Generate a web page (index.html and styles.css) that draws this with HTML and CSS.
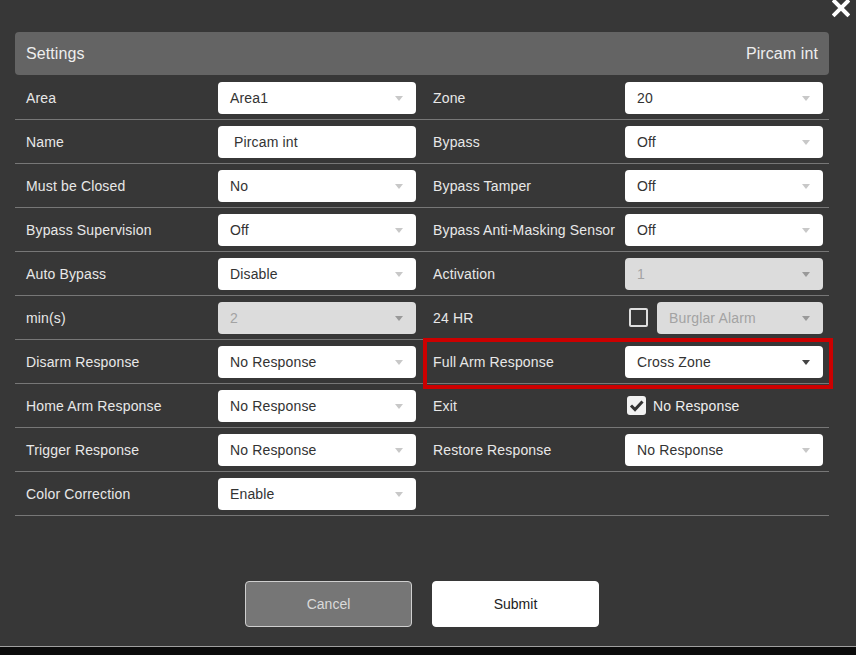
FILE: index.html
```html
<!DOCTYPE html>
<html>
<head>
<meta charset="utf-8">
<link rel="stylesheet" href="styles.css">
</head>
<body>
<div class="modal">
  <svg class="close" width="18" height="18" viewBox="0 0 18 18"><path d="M2.5 1.5 L15.5 14.5 M15.5 1.5 L2.5 14.5" stroke="#fff" stroke-width="4" stroke-linecap="square"/></svg>
  <div class="header"><span>Settings</span><span>Pircam int</span></div>
  <div class="grid">
    <div class="row">
      <div class="cell"><div class="label">Area</div><div class="select">Area1<i class="arrow"></i></div></div>
      <div class="cell"><div class="label">Zone</div><div class="select">20<i class="arrow"></i></div></div>
    </div>
    <div class="row">
      <div class="cell"><div class="label">Name</div><div class="select input">Pircam int</div></div>
      <div class="cell"><div class="label">Bypass</div><div class="select">Off<i class="arrow"></i></div></div>
    </div>
    <div class="row">
      <div class="cell"><div class="label">Must be Closed</div><div class="select">No<i class="arrow"></i></div></div>
      <div class="cell"><div class="label">Bypass Tamper</div><div class="select">Off<i class="arrow"></i></div></div>
    </div>
    <div class="row">
      <div class="cell"><div class="label">Bypass Supervision</div><div class="select">Off<i class="arrow"></i></div></div>
      <div class="cell"><div class="label">Bypass Anti-Masking Sensor</div><div class="select">Off<i class="arrow"></i></div></div>
    </div>
    <div class="row">
      <div class="cell"><div class="label">Auto Bypass</div><div class="select">Disable<i class="arrow"></i></div></div>
      <div class="cell"><div class="label">Activation</div><div class="select disabled">1<i class="arrow"></i></div></div>
    </div>
    <div class="row">
      <div class="cell"><div class="label">min(s)</div><div class="select disabled">2<i class="arrow"></i></div></div>
      <div class="cell"><div class="label">24 HR</div><div class="combo"><span class="checkbox"></span><div class="select disabled small">Burglar Alarm<i class="arrow"></i></div></div></div>
    </div>
    <div class="row">
      <div class="cell"><div class="label">Disarm Response</div><div class="select">No Response<i class="arrow"></i></div></div>
      <div class="cell highlight"><div class="label">Full Arm Response</div><div class="select">Cross Zone<i class="arrow dark"></i></div></div>
    </div>
    <div class="row">
      <div class="cell"><div class="label">Home Arm Response</div><div class="select">No Response<i class="arrow"></i></div></div>
      <div class="cell"><div class="label">Exit</div><div class="checkwrap"><span class="checkbox checked"><svg width="19" height="19" viewBox="0 0 19 19"><path d="M4 9.5 L8 13.5 L15.5 5.5" fill="none" stroke="#333" stroke-width="3"/></svg></span><span class="checktext">No Response</span></div></div>
    </div>
    <div class="row">
      <div class="cell"><div class="label">Trigger Response</div><div class="select">No Response<i class="arrow"></i></div></div>
      <div class="cell"><div class="label">Restore Response</div><div class="select">No Response<i class="arrow"></i></div></div>
    </div>
    <div class="row">
      <div class="cell"><div class="label">Color Correction</div><div class="select">Enable<i class="arrow"></i></div></div>
      <div class="cell"></div>
    </div>
  </div>
  <div class="footer">
    <button class="btn cancel">Cancel</button>
    <button class="btn submit">Submit</button>
  </div>
</div>
</body>
</html>
```
FILE: styles.css
```css
html, body {
  margin: 0;
  padding: 0;
  background: #0b0b0b;
  font-family: "Liberation Sans", Arial, sans-serif;
}
.modal {
  position: relative;
  width: 856px;
  height: 647px;
  background: #373737;
  border-bottom: 1px solid #a0a0a0;
  padding-top: 32px;
  box-sizing: border-box;
}
.close {
  position: absolute;
  top: 0;
  left: 832px;
}
.header {
  margin: 0 27px 0 15px;
  height: 43px;
  background: #646464;
  border-radius: 4px;
  display: flex;
  justify-content: space-between;
  align-items: center;
  padding: 0 11px;
  color: #eeeeee;
  font-size: 16px;
  letter-spacing: 0.1px;
}
.grid {
  margin: 1px 27px 0 15px;
}
.row {
  display: flex;
  height: 43px;
  border-bottom: 1px solid #777;
}
.cell {
  width: 407px;
  display: flex;
  align-items: center;
  padding: 0 6px 0 11px;
  box-sizing: border-box;
}
.label {
  width: 192px;
  color: #e8e8e8;
  font-size: 14px;
  letter-spacing: 0.15px;
  white-space: nowrap;
}
.select {
  position: relative;
  width: 198px;
  height: 32px;
  box-sizing: border-box;
  background: #fff;
  border-radius: 4px;
  color: #333;
  font-size: 14px;
  letter-spacing: 0.15px;
  line-height: 32px;
  padding-left: 12px;
}
.select.input {
  padding-left: 16px;
}
.select.disabled {
  background: #dcdcdc;
  color: #a3a3a3;
}
.select.small {
  width: 166px;
}
.arrow {
  position: absolute;
  right: 13px;
  top: 14px;
  width: 0;
  height: 0;
  border-left: 4.5px solid transparent;
  border-right: 4.5px solid transparent;
  border-top: 5px solid #c8c8c8;
}
.select.disabled .arrow {
  border-top-color: #999;
}
.arrow.dark {
  border-top-color: #444;
}
.combo {
  display: flex;
  align-items: center;
}
.combo .checkbox {
  margin: 0 9px 0 4px;
}
.checkbox {
  display: inline-block;
  width: 19px;
  height: 19px;
  box-sizing: border-box;
  border: 2px solid #dedede;
  border-radius: 2px;
}
.checkbox.checked {
  background: #f2f2f2;
  border: none;
  border-radius: 3px;
}
.checkbox svg {
  display: block;
}
.checkwrap {
  display: flex;
  align-items: center;
  margin-left: 2px;
}
.checktext {
  margin-left: 7px;
  color: #eee;
  font-size: 14px;
  letter-spacing: 0.15px;
}
.highlight {
  position: relative;
}
.highlight::after {
  content: "";
  position: absolute;
  top: -2px;
  left: 1px;
  right: -4px;
  bottom: -6px;
  border: 4px solid #cc0000;
}
.footer {
  display: flex;
  justify-content: center;
  gap: 20px;
  margin: 65px 27px 0 15px;
}
.btn {
  width: 167px;
  height: 46px;
  border-radius: 4px;
  font-family: "Liberation Sans", Arial, sans-serif;
  font-size: 14px;
  box-sizing: border-box;
}
.cancel {
  background: #767676;
  border: 1px solid #cfcfcf;
  color: #dadada;
}
.submit {
  background: #fff;
  border: 1px solid #fff;
  color: #222;
}
```
